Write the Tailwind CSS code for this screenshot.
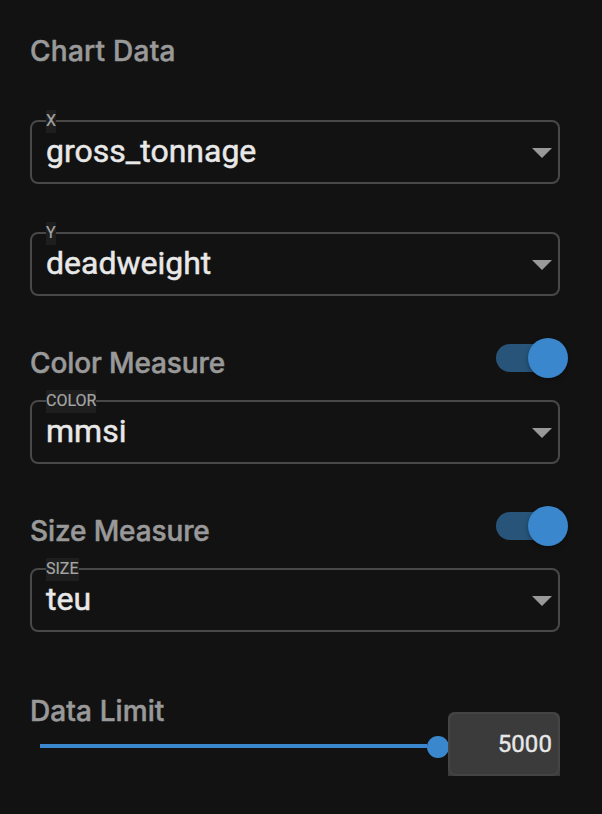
<!DOCTYPE html>
<html lang="en">
<head>
    <meta charset="UTF-8">
    <meta name="viewport" content="width=device-width, initial-scale=1.0">
    <title>Chart Data</title>
    <script src="https://cdn.jsdelivr.net/npm/@tailwindcss/browser@4"></script>
</head>
<body class="bg-[#121212] font-[Roboto,sans-serif] h-screen overflow-hidden">

    <main class="pl-[30px] w-[560px]">
        <h2 class="pt-[33px] h-[120px] text-[28px] leading-9 font-[Inter,sans-serif] font-medium tracking-[0.25px] [-webkit-text-stroke:0.5px_#999] text-[#999]">Chart Data</h2>

        <!-- X axis -->
        <div class="relative h-16 mb-12 border-2 border-[#484848] rounded-lg flex items-center justify-between pl-3.5 pr-1.5">
            <label class="absolute left-3.5 -top-3 h-[23px] leading-[22px] bg-[#1e1e1e] text-[#a5a5a5] text-base [-webkit-text-stroke:0.2px_#a5a5a5]">X</label>
            <span class="pb-0.5 text-[32px] leading-9 text-[#e8e8e8] [-webkit-text-stroke:0.5px_#e8e8e8]">gross_tonnage</span>
            <svg class="w-5 h-2.5 mt-0.5" viewBox="0 0 20 10" fill="#999"><path d="M0 0h20L10 10z"/></svg>
        </div>

        <!-- Y axis -->
        <div class="relative h-16 border-2 border-[#484848] rounded-lg flex items-center justify-between pl-3.5 pr-1.5">
            <label class="absolute left-3.5 -top-3 h-[23px] leading-[22px] bg-[#1e1e1e] text-[#a5a5a5] text-base [-webkit-text-stroke:0.2px_#a5a5a5]">Y</label>
            <span class="pb-0.5 text-[32px] leading-9 text-[#e8e8e8] [-webkit-text-stroke:0.5px_#e8e8e8]">deadweight</span>
            <svg class="w-5 h-2.5 mt-0.5" viewBox="0 0 20 10" fill="#999"><path d="M0 0h20L10 10z"/></svg>
        </div>

        <!-- Color measure -->
        <div class="h-[104px] pt-[42px] flex justify-between -mr-2">
            <h2 class="pt-[7px] text-[28px] leading-9 font-[Inter,sans-serif] font-medium tracking-[-0.12px] [-webkit-text-stroke:0.5px_#999] text-[#999]">Color Measure</h2>
            <div class="w-[72px] h-10 flex items-center">
                <div class="w-16 h-7 rounded-full bg-[#275478]"></div>
                <div class="w-10 h-10 -ml-8 shrink-0 rounded-full bg-[#3a87cd] shadow-[0_2px_4px_rgba(0,0,0,0.3)]"></div>
            </div>
        </div>
        <div class="relative h-16 border-2 border-[#484848] rounded-lg flex items-center justify-between pl-3.5 pr-1.5">
            <label class="absolute left-3.5 -top-3 h-[23px] leading-[22px] bg-[#1e1e1e] text-[#a5a5a5] text-base [-webkit-text-stroke:0.2px_#a5a5a5]">COLOR</label>
            <span class="pb-0.5 text-[32px] leading-9 text-[#e8e8e8] [-webkit-text-stroke:0.5px_#e8e8e8]">mmsi</span>
            <svg class="w-5 h-2.5 mt-0.5" viewBox="0 0 20 10" fill="#999"><path d="M0 0h20L10 10z"/></svg>
        </div>

        <!-- Size measure -->
        <div class="h-[104px] pt-[42px] flex justify-between -mr-2">
            <h2 class="pt-[7px] text-[28px] leading-9 font-[Inter,sans-serif] font-medium tracking-[-0.12px] [-webkit-text-stroke:0.5px_#999] text-[#999]">Size Measure</h2>
            <div class="w-[72px] h-10 flex items-center">
                <div class="w-16 h-7 rounded-full bg-[#275478]"></div>
                <div class="w-10 h-10 -ml-8 shrink-0 rounded-full bg-[#3a87cd] shadow-[0_2px_4px_rgba(0,0,0,0.3)]"></div>
            </div>
        </div>
        <div class="relative h-16 border-2 border-[#484848] rounded-lg flex items-center justify-between pl-3.5 pr-1.5">
            <label class="absolute left-3.5 -top-3 h-[23px] leading-[22px] bg-[#1e1e1e] text-[#a5a5a5] text-base [-webkit-text-stroke:0.2px_#a5a5a5]">SIZE</label>
            <span class="pb-0.5 text-[32px] leading-9 text-[#e8e8e8] [-webkit-text-stroke:0.5px_#e8e8e8]">teu</span>
            <svg class="w-5 h-2.5 mt-0.5" viewBox="0 0 20 10" fill="#999"><path d="M0 0h20L10 10z"/></svg>
        </div>

        <!-- Data limit -->
        <div class="pt-[61px] flex">
            <div class="w-[418px]">
                <h2 class="text-[28px] leading-9 font-[Inter,sans-serif] font-medium tracking-[0.1px] [-webkit-text-stroke:0.5px_#999] text-[#999]">Data Limit</h2>
                <div class="ml-2.5 mt-1.5 flex items-start">
                    <div class="mt-[9px] w-[387px] shrink-0 h-1 bg-[#3a87cd]"></div>
                    <div class="mt-px w-[22px] h-[22px] shrink-0 rounded-full bg-[#3a87cd]"></div>
                </div>
            </div>
            <div class="relative mt-[19px] w-28 h-16 shrink-0 rounded-t-md bg-[#3b3b3b]">
                <div class="h-full rounded-lg border-2 border-[#444] flex items-center justify-end pr-1.5 text-2xl tracking-[0.1px] text-[#e8e8e8] [-webkit-text-stroke:0.4px_#e8e8e8]">5000</div>
            </div>
        </div>
    </main>
</body>
</html>
